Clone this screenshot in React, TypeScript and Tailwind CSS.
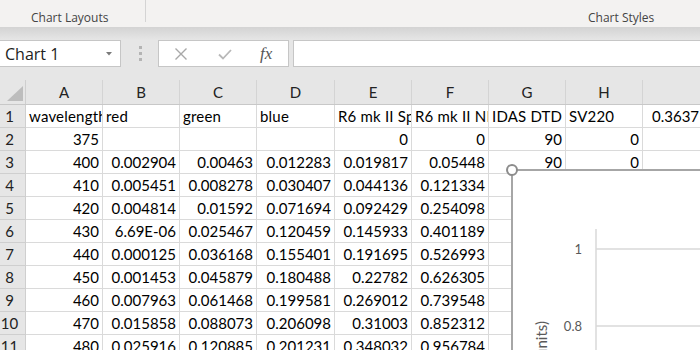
import React from "react";

const colW = [
  "w-[77px]",
  "w-[77px]",
  "w-[77px]",
  "w-[78px]",
  "w-[77px]",
  "w-[77px]",
  "w-[77px]",
  "w-[77px]",
  "w-[120px]",
];
const letters = ["A", "B", "C", "D", "E", "F", "G", "H", "I"];

type Cell = string | null;
const rows: Cell[][] = [
  ["wavelength", "red", "green", "blue", "R6 mk II Spectral", "R6 mk II NIR", "IDAS DTD", "SV220", "0.363719"],
  ["375", null, null, null, "0", "0", "90", "0", null],
  ["400", "0.002904", "0.00463", "0.012283", "0.019817", "0.05448", "90", "0", null],
  ["410", "0.005451", "0.008278", "0.030407", "0.044136", "0.121334", null, null, null],
  ["420", "0.004814", "0.01592", "0.071694", "0.092429", "0.254098", null, null, null],
  ["430", "6.69E-06", "0.025467", "0.120459", "0.145933", "0.401189", null, null, null],
  ["440", "0.000125", "0.036168", "0.155401", "0.191695", "0.526993", null, null, null],
  ["450", "0.001453", "0.045879", "0.180488", "0.22782", "0.626305", null, null, null],
  ["460", "0.007963", "0.061468", "0.199581", "0.269012", "0.739548", null, null, null],
  ["470", "0.015858", "0.088073", "0.206098", "0.31003", "0.852312", null, null, null],
  ["480", "0.025916", "0.120885", "0.201231", "0.348032", "0.956784", null, null, null],
];

function CellView({ v, ci, ri }: { v: Cell; ci: number; ri: number }) {
  const isText = ri === 0;
  const base =
    colW[ci] +
    " h-full shrink-0 border-r border-b border-[#dadada] flex items-center overflow-hidden whitespace-nowrap";
  if (v === null) return <div className={base} />;
  if (isText) {
    return (
      <div className={base + (ci === 8 ? " pl-[9px]" : " pl-[3px] tracking-[0.2px]")}>
        <span>{v}</span>
      </div>
    );
  }
  return (
    <div className={base + " justify-end pr-[3px]"}>
      <span>{v}</span>
    </div>
  );
}

export default function App() {
  return (
    <div
      className="w-[700px] h-[350px] overflow-hidden bg-[#e6e6e6] relative"
      style={{ fontFamily: "'Open Sans', 'Noto Sans', sans-serif" }}
    >
      {/* Ribbon bottom */}
      <div className="h-[27px] bg-[#f3f2f1] flex text-[12px] text-[#444]">
        <div className="w-[145px] pl-[31px] pt-[9px] leading-[18px]">Chart Layouts</div>
        <div className="w-px h-[22px] bg-[#d4d4d4]" />
        <div className="ml-[442px] pt-[9px] leading-[18px]">Chart Styles</div>
      </div>
      <div className="h-[13px] bg-gradient-to-b from-[#d3d3d3] to-[#e6e6e6]" />

      {/* Formula bar */}
      <div className="h-[27px] flex">
        <div className="w-[121px] bg-white border border-l-0 border-[#c6c6c6] flex items-center pl-[5px] text-[16px] text-[#222] relative">
          Chart 1
          <svg className="absolute left-[106px] top-[11px]" width="6" height="4" viewBox="0 0 6 4">
            <path d="M0 0 L6 0 L3 3.5 Z" fill="#7a7a7a" />
          </svg>
        </div>
        <div className="w-[37px] flex flex-col items-center justify-center gap-[3px] pl-[1px]">
          <div className="w-[3px] h-[3px] bg-[#b4b4b4]" />
          <div className="w-[3px] h-[3px] bg-[#b4b4b4]" />
          <div className="w-[3px] h-[3px] bg-[#b4b4b4]" />
        </div>
        <div className="w-[131px] bg-white border border-[#c6c6c6] flex items-center pl-[15px]">
          <svg width="14" height="14" viewBox="0 0 14 14">
            <path d="M1.5 1.5 L12.5 12.5 M12.5 1.5 L1.5 12.5" stroke="#a8a8a8" strokeWidth="1.4" fill="none" />
          </svg>
          <svg className="ml-[30px]" width="14" height="14" viewBox="0 0 14 14">
            <path d="M1 7.5 L5 11.5 L13 3" stroke="#b8b8b8" strokeWidth="1.8" fill="none" />
          </svg>
          <span
            className="ml-[28px] italic text-[17px] text-[#555] leading-none"
            style={{ fontFamily: "'Liberation Serif', serif" }}
          >
            fx
          </span>
        </div>
        <div className="ml-[4px] flex-1 bg-white border border-r-0 border-[#c6c6c6]" />
      </div>
      <div className="h-[13px]" />

      {/* Grid */}
      <div className="text-[15px] text-black" style={{ fontFamily: "Lato, 'Open Sans', sans-serif" }}>
        <div className="h-[25px] flex bg-[#e6e6e6] border-b border-[#c8c8c8] text-[#222]">
          <div className="w-[26px] h-full shrink-0 border-r border-[#cfcfcf] relative">
            <svg className="absolute left-[7px] top-[6px]" width="16" height="15" viewBox="0 0 16 15">
              <path d="M16 0 L16 15 L0 15 Z" fill="#bdbdbd" />
            </svg>
          </div>
          {letters.map((l, i) => (
            <div
              key={l}
              className={colW[i] + " h-full shrink-0 border-r border-[#d4d4d4] flex items-center justify-center"}
            >
              {l}
            </div>
          ))}
        </div>
        {rows.map((r, ri) => (
          <div key={ri} className="h-[23px] flex bg-white">
            <div className="w-[26px] h-full shrink-0 bg-[#e6e6e6] border-r border-b border-[#cfcfcf] flex items-center justify-center pr-[6px] text-[#222]">
              {ri + 1}
            </div>
            {r.map((v, ci) => (
              <CellView key={ci} v={v} ci={ci} ri={ri} />
            ))}
          </div>
        ))}
      </div>

      {/* Chart overlay */}
      <div className="absolute left-[511px] top-[169px] w-[200px] h-[190px] bg-white border-l-2 border-t-2 border-[#a6a6a6]">
        <svg width="200" height="190" className="absolute left-[-2px] top-[-2px]">
          <line x1="85" y1="60" x2="85" y2="190" stroke="#d9d9d9" strokeWidth="1.5" />
          <line x1="85" y1="80" x2="200" y2="80" stroke="#d9d9d9" strokeWidth="1.5" />
          <line x1="85" y1="157" x2="200" y2="157" stroke="#d9d9d9" strokeWidth="1.5" />
          <text x="71" y="84.5" textAnchor="end" fontSize="13" fill="#595959" fontFamily="Lato, sans-serif">
            1
          </text>
          <text x="71" y="161.5" textAnchor="end" fontSize="13" fill="#595959" fontFamily="Lato, sans-serif">
            0.8
          </text>
          <text
            x="0"
            y="0"
            transform="translate(36 152) rotate(-90)"
            textAnchor="end"
            fontSize="15"
            fill="#595959"
            fontFamily="Lato, sans-serif"
          >
            Relative response (units)
          </text>
        </svg>
      </div>
      <div className="absolute left-[506px] top-[164px] w-[12px] h-[12px] rounded-full bg-white border-2 border-[#8c8c8c]" />
    </div>
  );
}
